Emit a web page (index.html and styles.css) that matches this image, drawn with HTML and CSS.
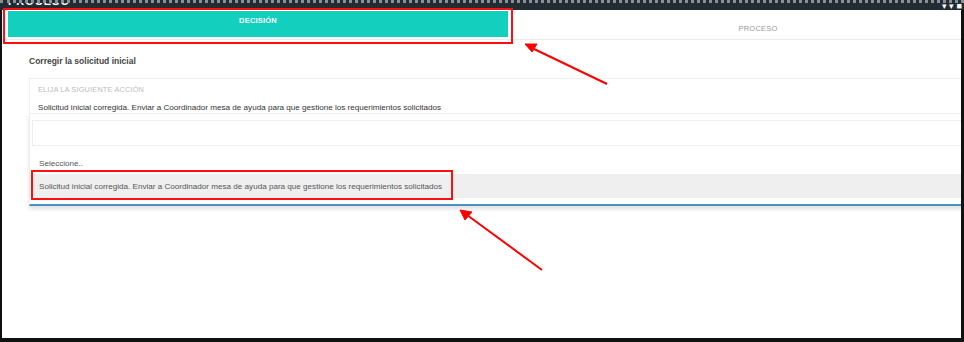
FILE: index.html
```html
<!DOCTYPE html>
<html lang="es">
<head>
    <meta charset="UTF-8">
    <meta name="viewport" content="width=device-width, initial-scale=1.0">
    <title>Decisión</title>
    <link rel="stylesheet" href="styles.css">
</head>
<body>
    <div class="shot">
        <div class="topbar">
            <span class="cut">PROCESO</span>
            <span class="icons">&#9662; &#9662; &#9632;</span>
        </div>
        <div class="page">
            <div class="tabs">
                <div class="tab active">DECISIÓN</div>
                <div class="tab">PROCESO</div>
            </div>
            <div class="content">
                <h2>Corregir la solicitud inicial</h2>
                <div class="field">
                    <label>ELIJA LA SIGUIENTE ACCIÓN</label>
                    <div class="value">Solicitud inicial corregida. Enviar a Coordinador mesa de ayuda para que gestione los requerimientos solicitados</div>
                </div>
                <div class="dropdown">
                    <div class="search"></div>
                    <ul class="options">
                        <li class="first">Seleccione..</li>
                        <li class="hl">Solicitud inicial corregida. Enviar a Coordinador mesa de ayuda para que gestione los requerimientos solicitados</li>
                    </ul>
                </div>
            </div>
        </div>

        <!-- anotaciones -->
        <div class="mark mark-tab"></div>
        <div class="mark mark-option"></div>
        <svg class="arrows" width="964" height="342" viewBox="0 0 964 342">
            <g stroke="#ff0000" stroke-width="2" fill="#ff0000">
                <line x1="607" y1="84" x2="532" y2="48"/>
                <polygon points="525,44 537,44 532,52" stroke-width="1"/>
                <line x1="542" y1="270" x2="467" y2="215"/>
                <polygon points="460,210 472,212 465,220" stroke-width="1"/>
            </g>
        </svg>
    </div>
</body>
</html>
```

FILE: styles.css
```css
body {
    margin: 0;
    background: #000;
    font-family: "Liberation Sans", Arial, sans-serif;
}
.shot {
    position: relative;
    width: 964px;
    height: 342px;
    background: #111;
    overflow: hidden;
}
.topbar {
    height: 10px;
    background: #232b33;
    border-top: 3px dotted #8a9098;
    box-sizing: border-box;
    display: flex;
    justify-content: space-between;
    align-items: flex-start;
    padding: 0 2px 0 8px;
    overflow: hidden;
}
.topbar .cut {
    color: #fff;
    font-weight: bold;
    font-size: 11px;
    line-height: 4px;
    letter-spacing: 1px;
    margin-top: -4px;
}
.topbar .icons {
    color: #fff;
    font-size: 9px;
    line-height: 6px;
}
.page {
    margin: 0 3px 4px 2px;
    height: 328px;
    background: #fff;
    overflow: hidden;
}
.tabs {
    display: flex;
    width: 1010px;
    padding: 1px 0 0 6px;
    border-bottom: 1px solid #ebebeb;
    height: 28px;
}
.tab {
    width: 500px;
    height: 26px;
    text-align: center;
    font-size: 7.5px;
    letter-spacing: 0.2px;
    color: #9a9a9a;
    line-height: 36px;
}
.tab.active {
    background: #13cfbd;
    color: #fff;
    font-weight: bold;
    line-height: 20px;
}
.content {
    padding: 15px 0 0 27px;
    width: 1000px;
}
h2 {
    margin: 0 0 11px;
    font-size: 8.5px;
    line-height: 12px;
    color: #444;
}
.field {
    border: 1px solid #efefef;
    border-bottom: none;
    padding: 5px 8px 0;
}
.field label {
    display: block;
    font-size: 7.3px;
    line-height: 12px;
    color: #bbb;
    letter-spacing: 0.2px;
}
.field .value {
    margin-top: 6px;
    font-size: 8.1px;
    line-height: 12px;
    color: #333;
}
.dropdown {
    margin-top: -1px;
    border: 1px solid #eee;
    border-bottom: 2px solid #4a90c8;
    padding: 6px 0 6px 2px;
    box-shadow: 0 3px 4px rgba(0, 0, 0, 0.12);
}
.search {
    height: 24px;
    border: 1px solid #eee;
}
.options {
    list-style: none;
    margin: 4px 0 0 -2px;
    padding: 0;
}
.options li {
    height: 24px;
    line-height: 26px;
    padding-left: 9px;
    font-size: 8.1px;
    color: #555;
}
.options li.first {
    line-height: 28px;
}
.options li.hl {
    background: #efefef;
}
.mark {
    position: absolute;
    border: 2.5px solid #ff1010;
    box-sizing: border-box;
}
.mark-tab {
    left: 3px;
    top: 8px;
    width: 510px;
    height: 36px;
}
.mark-option {
    left: 31px;
    top: 170px;
    width: 422px;
    height: 30px;
}
.arrows {
    position: absolute;
    left: 0;
    top: 0;
}
```
